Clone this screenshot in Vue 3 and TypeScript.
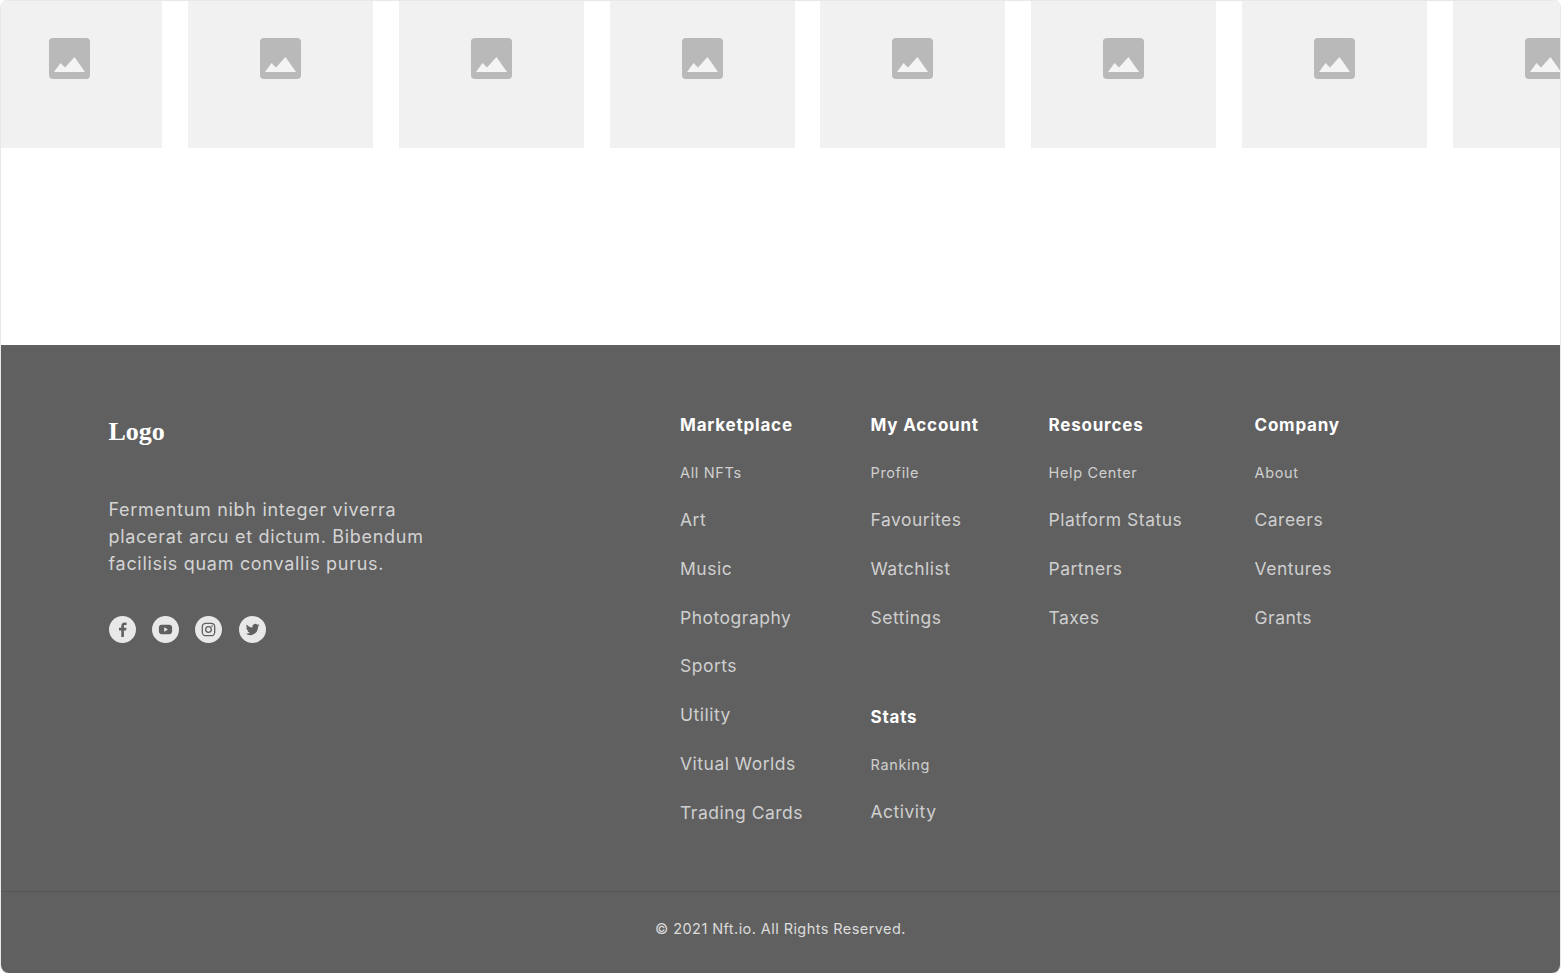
<script setup lang="ts">
interface LinkGroup {
  title: string;
  links: string[];
}

const tiles = Array.from({ length: 8 }, (_, i) => i);

// each column can hold more than one group
const columns: LinkGroup[][] = [
  [
    {
      title: 'Marketplace',
      links: ['All NFTs', 'Art', 'Music', 'Photography', 'Sports', 'Utility', 'Vitual Worlds', 'Trading Cards']
    }
  ],
  [
    { title: 'My Account', links: ['Profile', 'Favourites', 'Watchlist', 'Settings'] },
    { title: 'Stats', links: ['Ranking', 'Activity'] }
  ],
  [{ title: 'Resources', links: ['Help Center', 'Platform Status', 'Partners', 'Taxes'] }],
  [{ title: 'Company', links: ['About', 'Careers', 'Ventures', 'Grants'] }]
];
</script>

<template>
  <div class="frame">
    <section class="gallery">
      <div v-for="tile in tiles" :key="tile" class="tile">
        <svg class="tile-icon" viewBox="0 0 41 41">
          <rect width="41" height="41" rx="4" fill="#b9b9b9" />
          <path d="M5 34 L11.5 25 L16 29.5 L25.5 19 L36 34 Z" fill="#f4f4f4" />
        </svg>
      </div>
    </section>

    <footer class="footer">
      <div class="footer-top">
        <div class="brand">
          <div class="logo">Logo</div>
          <p class="about">Fermentum nibh integer viverra placerat arcu et dictum. Bibendum facilisis quam convallis purus.</p>
          <div class="social">
            <span class="social-btn">
              <svg viewBox="0 0 27 27"><path d="M14.9 21v-6.6h2.2l.4-2.6h-2.6v-1.6c0-.8.3-1.2 1.3-1.2h1.4V6.7c-.4 0-1.1-.1-1.9-.1-2 0-3.4 1.2-3.4 3.4v1.8H10v2.6h2.3V21z" /></svg>
            </span>
            <span class="social-btn">
              <svg viewBox="0 0 27 27"><path d="M9.5 8.8h8c1.5 0 2.6 1.1 2.6 2.6v4.2c0 1.5-1.1 2.6-2.6 2.6h-8c-1.5 0-2.6-1.1-2.6-2.6v-4.2c0-1.5 1.1-2.6 2.6-2.6z" /><path d="M12.2 11.3v4.4l3.7-2.2z" fill="#e8e8e8" /></svg>
            </span>
            <span class="social-btn">
              <svg viewBox="0 0 27 27"><rect x="7.3" y="7.3" width="12.4" height="12.4" rx="3.5" fill="none" stroke="#606060" stroke-width="1.3" /><circle cx="13.5" cy="13.5" r="2.8" fill="none" stroke="#606060" stroke-width="1.3" /><circle cx="17" cy="10" r=".8" /></svg>
            </span>
            <span class="social-btn">
              <svg viewBox="0 0 27 27"><path d="M20.5 9.2c-.5.2-1 .4-1.6.4.6-.3 1-.8 1.2-1.5-.5.3-1.1.6-1.8.7a2.8 2.8 0 0 0-4.8 2.600c-2.300-.1-4.400-1.200-5.800-3-.8 1.300-.4 3 .9 3.800-.5 0-.9-.1-1.300-.4 0 1.400 1 2.600 2.300 2.800-.4.100-.8.100-1.300 0 .4 1.100 1.400 1.900 2.600 2a5.700 5.700 0 0 1-4.200 1.200 8 8 0 0 0 12.300-7.100c.6-.4 1.100-.9 1.500-1.500z" /></svg>
            </span>
          </div>
        </div>

        <nav class="columns">
          <div v-for="(groups, i) in columns" :key="i" class="column">
            <div v-for="group in groups" :key="group.title" class="group">
              <h4 class="group-title">{{ group.title }}</h4>
              <a v-for="(link, j) in group.links" :key="link" class="link" :class="{ 'link-first': j === 0 }">{{ link }}</a>
            </div>
          </div>
        </nav>
      </div>

      <div class="footer-bottom">© 2021 Nft.io. All Rights Reserved.</div>
    </footer>
  </div>
</template>

<style>
html,
body {
  margin: 0;
  background: #fff;
}
</style>

<style scoped>
.frame {
  box-sizing: border-box;
  width: 1559px;
  height: 973px;
  margin-left: 1px;
  overflow: hidden;
  border-radius: 8px;
  background: #fff;
  box-shadow: 0 0 0 1px #e8e8e8;
  font-family: Inter, "Open Sans", sans-serif;
  display: flex;
  flex-direction: column;
}

.gallery {
  display: flex;
  gap: 25.83px;
  height: 345px;
  border-top: 1px solid #e8e8e8;
  box-sizing: border-box;
  margin-left: -23.83px;
  overflow: hidden;
  flex-shrink: 0;
}

.tile {
  flex: 0 0 185px;
  height: 147px;
  background: #f1f1f1;
  display: flex;
  justify-content: center;
  padding-top: 37px;
  box-sizing: border-box;
}

.tile-icon {
  width: 41px;
  height: 41px;
}

.footer {
  flex: 1;
  background: #606060;
  display: flex;
  flex-direction: column;
}

.footer-top {
  display: flex;
  height: 547px;
  box-sizing: border-box;
  padding: 57px 0 0 107.5px;
  border-bottom: 1px solid #565656;
}

.brand {
  width: 571.5px;
}

.logo {
  font-family: "Liberation Serif", serif;
  font-weight: 700;
  font-size: 26px;
  line-height: 30px;
  color: #fff;
  margin-top: 15px;
}

.about {
  width: 335px;
  margin: 49px 0 0;
  font-size: 18px;
  letter-spacing: 0.7px;
  line-height: 27px;
  color: #d4d4d4;
}

.social {
  display: flex;
  gap: 16.4px;
  margin-top: 39px;
}

.social-btn {
  width: 27px;
  height: 27px;
  border-radius: 50%;
  background: #e8e8e8;
}

.social-btn svg {
  display: block;
  width: 27px;
  height: 27px;
  fill: #606060;
}

.columns {
  display: grid;
  grid-template-columns: 190.5px 178px 206px auto;
}

.group + .group {
  margin-top: 51.6px;
}

.group-title {
  margin: 0;
  height: 47px;
  line-height: 47px;
  font-size: 17px;
  font-weight: 700;
  letter-spacing: 0.8px;
  color: #fff;
}

.link {
  display: block;
  height: 48.8px;
  line-height: 48.8px;
  font-size: 17.5px;
  letter-spacing: 0.5px;
  color: #cfcfcf;
}

.link-first {
  height: 47px;
  line-height: 47px;
  font-size: 14.5px;
  letter-spacing: 0.65px;
}

.footer-bottom {
  text-align: center;
  font-size: 14.5px;
  letter-spacing: 0.43px;
  line-height: 20px;
  color: #dcdcdc;
  padding-top: 26.5px;
}
</style>
